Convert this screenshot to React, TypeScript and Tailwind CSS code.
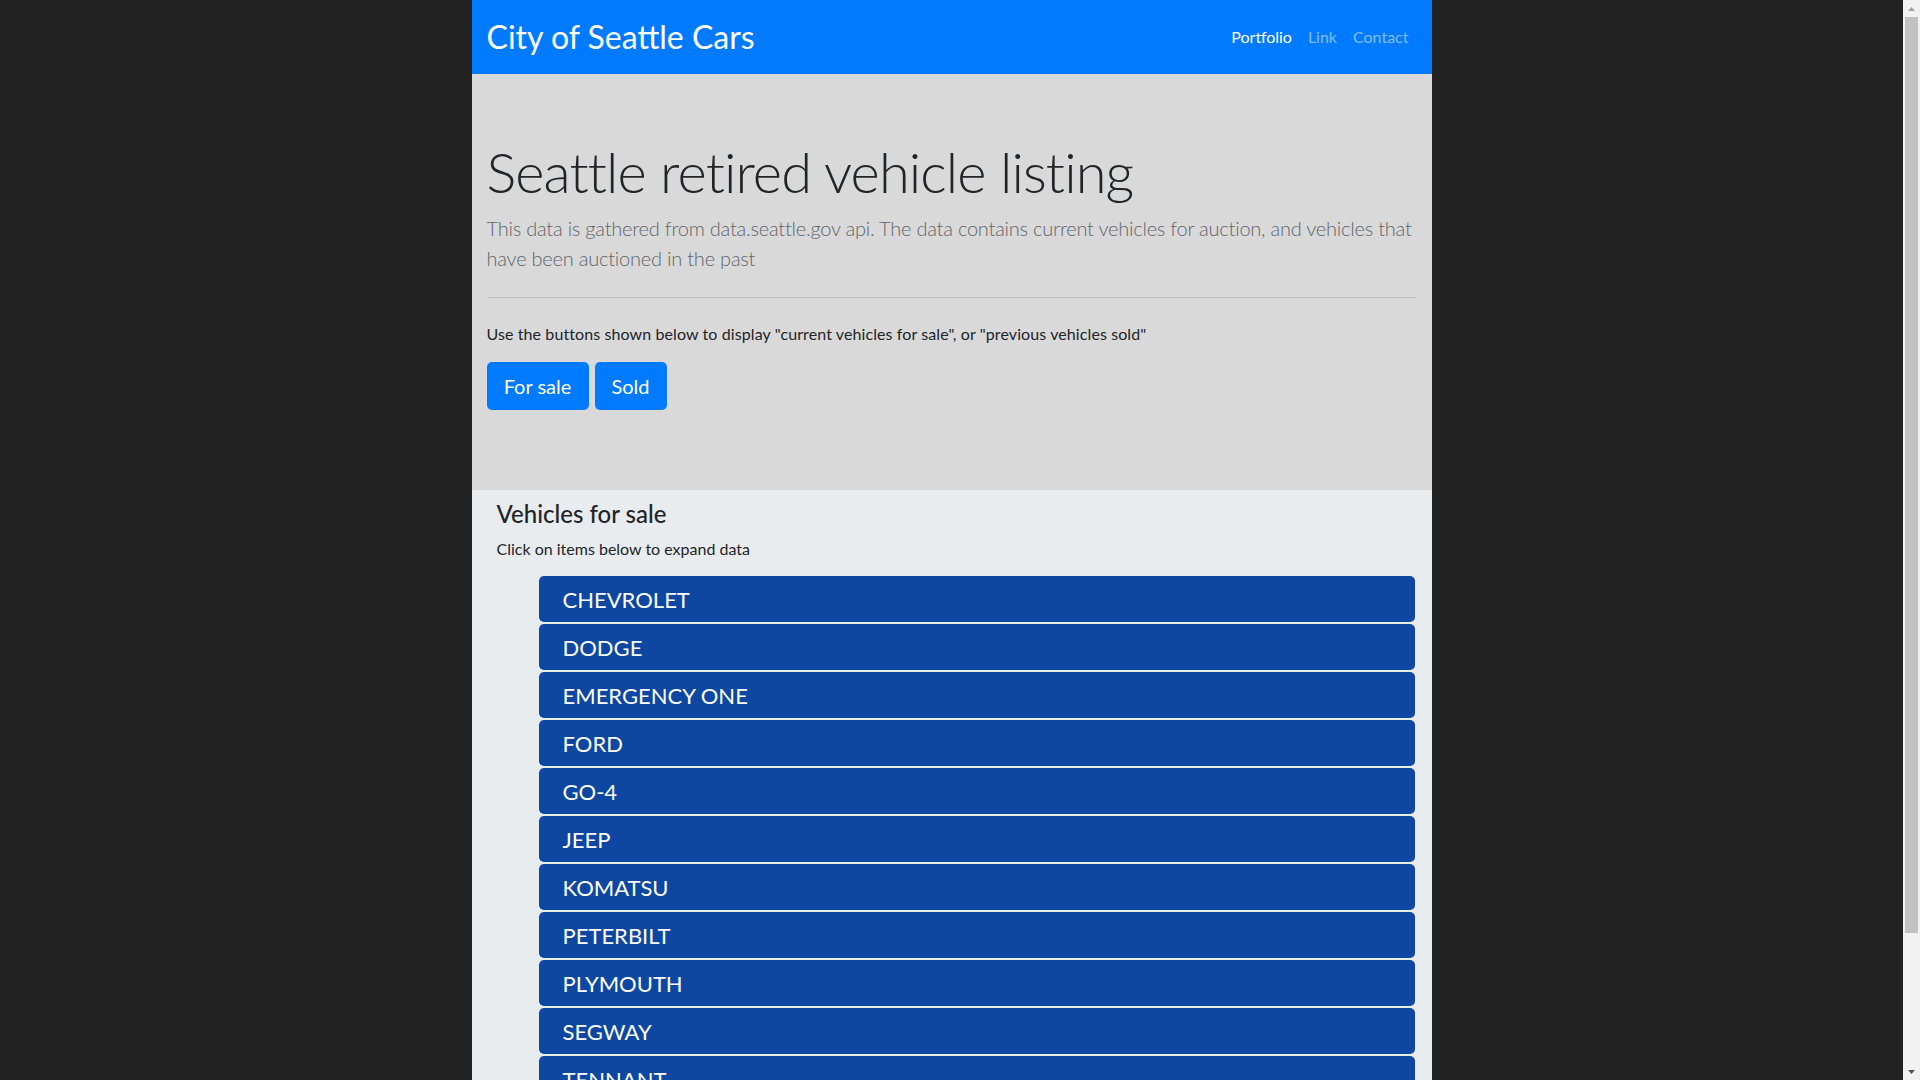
const makes = [
  'CHEVROLET',
  'DODGE',
  'EMERGENCY ONE',
  'FORD',
  'GO-4',
  'JEEP',
  'KOMATSU',
  'PETERBILT',
  'PLYMOUTH',
  'SEGWAY',
  'TENNANT',
  'TOYOTA',
]

const font = "font-['Segoe_UI','Lato','Noto_Sans',sans-serif]"

function Navbar() {
  return (
    <nav className="flex h-[74px] items-center justify-between bg-[#007bff] px-[15px]">
      <a href="#" className="text-[32px] leading-[1.2] text-white">
        City of Seattle Cars
      </a>
      <ul className="flex items-center text-[16px] leading-6">
        <li>
          <a href="#" className="px-2 text-white">
            Portfolio
          </a>
        </li>
        <li>
          <a href="#" className="px-2 text-white/50">
            Link
          </a>
        </li>
        <li>
          <a href="#" className="px-2 text-white/50">
            Contact
          </a>
        </li>
      </ul>
    </nav>
  )
}

function Jumbotron() {
  return (
    <header className="bg-[#d9d9d9] px-[15px] pt-16 pb-20 text-[#212529]">
      <h1 className="mb-2 text-[56px] leading-[1.2] font-light tracking-[-0.9px]">
        Seattle retired vehicle listing
      </h1>
      <p className="text-[20px] leading-[30px] font-light tracking-[-0.22px] text-[#5f666d]">
        <span className="whitespace-nowrap">
          This data is gathered from data.seattle.gov api. The data contains current vehicles for
          auction, and vehicles that
        </span>
        <br />
        have been auctioned in the past
      </p>
      <hr className="my-6 border-0 border-t border-black/10" />
      <p className="text-[16px] leading-6 tracking-[0.1px]">
        Use the buttons shown below to display "current vehicles for sale", or "previous vehicles
        sold"
      </p>
      <div className="mt-4 flex gap-[6px]">
        <button
          type="button"
          className="h-12 w-[102px] rounded-[5px] bg-[#007bff] text-[20px] text-white"
        >
          For sale
        </button>
        <button
          type="button"
          className="h-12 w-[72px] rounded-[5px] bg-[#007bff] text-[20px] text-white"
        >
          Sold
        </button>
      </div>
    </header>
  )
}

function VehicleList() {
  return (
    <section className="bg-[#e9ecef] pt-[9px] pr-[17px] pb-8 pl-[25px] text-[#212529]">
      <h4 className="text-[24px] leading-[29px] font-medium">Vehicles for sale</h4>
      <p className="mt-[9px] text-[16px] leading-6">Click on items below to expand data</p>
      <ul className="mt-[15px] ml-[42px] flex flex-col gap-[2px]">
        {makes.map((make) => (
          <li
            key={make}
            className="flex h-[46px] cursor-pointer items-center rounded-[5px] bg-[#0d47a1] pl-6 text-[22px] text-white"
          >
            {make}
          </li>
        ))}
      </ul>
    </section>
  )
}

// Windows-style scrollbar down the right edge
function Scrollbar() {
  return (
    <div className="flex w-[17px] shrink-0 flex-col bg-[#f1f1f1]">
      <div className="flex h-[17px] items-center justify-center">
        <svg width="7" height="4" viewBox="0 0 7 4">
          <path d="M3.5 0 7 4H0z" fill="#a3a3a3" />
        </svg>
      </div>
      <div className="mx-[2px] h-[916px] bg-[#c1c1c1]" />
      <div className="flex-1" />
      <div className="flex h-[17px] items-center justify-center">
        <svg width="7" height="4" viewBox="0 0 7 4">
          <path d="M0 0h7L3.5 4z" fill="#505050" />
        </svg>
      </div>
    </div>
  )
}

export default function App() {
  return (
    <div className={`flex h-screen overflow-hidden bg-[#212121] ${font}`}>
      <div className="flex-1 overflow-hidden">
        <div className="mx-auto w-[960px]">
          <Navbar />
          <Jumbotron />
          <VehicleList />
        </div>
      </div>
      <Scrollbar />
    </div>
  )
}
